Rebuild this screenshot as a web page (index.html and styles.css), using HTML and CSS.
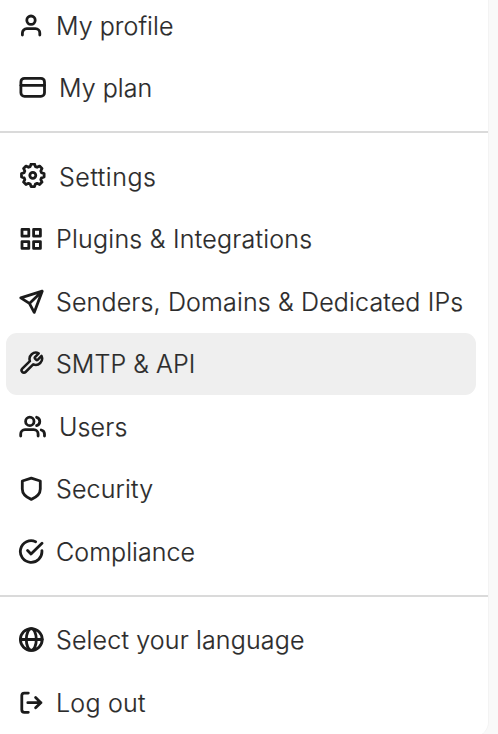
FILE: index.html
```
<!DOCTYPE html>
<html lang="en">
<head>
<meta charset="utf-8">
<title>Account menu</title>
<link rel="stylesheet" href="styles.css">
</head>
<body>
<nav class="menu">
  <div class="group">
    <a class="item"><svg class="icon" viewBox="0 0 26 28"><circle cx="13" cy="8.2" r="4.2"/><path d="M4.4 23V21a4.3 4.3 0 0 1 4.3-4.3h8.8a4.3 4.3 0 0 1 4.3 4.3v2"/></svg><span class="label">My profile</span></a>
    <a class="item"><svg class="icon wide" viewBox="0 0 29 28"><rect x="2.9" y="4.3" width="23.6" height="18" rx="3.6"/><path d="M3 11.3h23.4"/></svg><span class="label">My plan</span></a>
  </div>
  <hr class="divider">
  <div class="group">
    <a class="item"><svg class="icon wide" viewBox="0 0 29 28"><g transform="translate(14.8 12.3)"><circle r="3"/><path d="M8.7-2.6 11.3-1.7V1.7L8.7 2.6 8 4.3 9.2 6.8 6.8 9.2 4.3 8 2.6 8.7 1.7 11.3H-1.7L-2.6 8.7-4.3 8-6.8 9.2-9.2 6.8-8 4.3-8.7 2.6-11.3 1.7V-1.7L-8.7-2.6-8-4.3-9.2-6.8-6.8-9.2-4.3-8-2.6-8.7-1.7-11.3H1.7L2.6-8.7 4.3-8 6.8-9.2 9.2-6.8 8-4.3Z"/></g></svg><span class="label loose">Settings</span></a>
    <a class="item"><svg class="icon" viewBox="0 0 26 28"><path d="M4 4.4h6.8v6.8H4zM15.6 4.4h6.8v6.8h-6.8zM4 16.6h6.8v6.8H4zM15.6 16.6h6.8v6.8h-6.8z"/></svg><span class="label medium">Plugins &amp; Integrations</span></a>
    <a class="item"><svg class="icon" viewBox="0 0 26 28"><path d="M24.2 3.2 2.8 9.8 11.4 15.4 16.2 24.4ZM24.2 3.2 11.4 15.4"/></svg><span class="label snug">Senders, Domains &amp; Dedicated IPs</span></a>
    <a class="item active"><svg class="icon" viewBox="0 0 26 28"><path class="fine" transform="translate(.2 .1) scale(1.1)" d="M15.3 6.4a1 1 0 0 0 0 1.3l1.1 1.1a1 1 0 0 0 1.3 0l3.5-3.5a5.8 5.8 0 0 1-7.57 7.7l-6.91 6.91a2.12 2.12 0 0 1-3-3l6.91-6.91a5.8 5.8 0 0 1 8-7.1z"/></svg><span class="label">SMTP &amp; API</span></a>
    <a class="item"><svg class="icon wide" viewBox="0 0 29 28"><circle cx="11.8" cy="8.4" r="4.2"/><path d="M2.7 23V21a4.3 4.3 0 0 1 4.3-4.3h8.8a4.3 4.3 0 0 1 4.3 4.3v2M18.6 4.3a4.3 4.3 0 0 1 0 8.3M23.2 17a4.3 4.3 0 0 1 3.3 4.1v1.9"/></svg><span class="label snug">Users</span></a>
    <a class="item"><svg class="icon" viewBox="0 0 26 28"><path d="M13.3 3.2 22.3 6v8c0 4.7-3.8 8.2-9 10.4C8.1 22.2 4.3 18.7 4.3 14V6Z"/></svg><span class="label snug">Security</span></a>
    <a class="item"><svg class="icon" viewBox="0 0 26 28"><path d="M17.6 3.7A10.8 10.8 0 1 0 23.9 12.6M9.6 12.5 13 16 24 5.2"/></svg><span class="label">Compliance</span></a>
  </div>
  <hr class="divider">
  <div class="group">
    <a class="item"><svg class="icon" viewBox="0 0 26 28"><circle cx="13.3" cy="13.5" r="10.9"/><ellipse cx="13.3" cy="13.5" rx="5" ry="10.9"/><path d="M2.4 13.5h21.8"/></svg><span class="label snug">Select your language</span></a>
    <a class="item"><svg class="icon" viewBox="0 0 26 28"><path d="M10.3 4.1H6.3a2.5 2.5 0 0 0-2.5 2.5v14.2a2.5 2.5 0 0 0 2.5 2.5h4M9.8 13.7H23M17.6 8.6l5.2 5.1-5.2 5.1"/></svg><span class="label medium">Log out</span></a>
  </div>
</nav>
</body>
</html>
```
FILE: styles.css
```
* { box-sizing: border-box; }
body {
  margin: 0;
  height: 734px;
  overflow: hidden;
  background: #f9f9f9;
  font-family: Inter, sans-serif;
}
.menu {
  width: 489px;
  height: 742px;
  margin-top: -6px;
  background: #fff;
  border-right: 1px solid #f3f3f3;
  border-bottom-right-radius: 14px;
}
.group { padding: 0 12px 0 6px; }
.item {
  display: flex;
  align-items: center;
  height: 62.5px;
  padding-left: 12px;
  border-radius: 11px;
  color: #2b2b2b;
  white-space: nowrap;
}
.active { background: #efefef; }
.icon {
  flex: none;
  width: 26px;
  height: 28px;
  margin: 1px 12px 0 0;
  fill: none;
  stroke: #1b1b1b;
  stroke-width: 2.8;
  stroke-linecap: round;
  stroke-linejoin: round;
}
.wide { width: 29px; }
.fine { stroke-width: 2.3; }
.label {
  padding-top: 1px;
  font-size: 25px;
  font-weight: 340;
  line-height: 32px;
  letter-spacing: 0.07px;
  -webkit-text-stroke: 0.2px #2b2b2b;
}
.snug { letter-spacing: 0.16px; }
.medium { letter-spacing: 0.25px; }
.loose { letter-spacing: 0.55px; }
.divider {
  height: 2px;
  margin: 12px 0;
  border: 0;
  background: #dadada;
}
```
